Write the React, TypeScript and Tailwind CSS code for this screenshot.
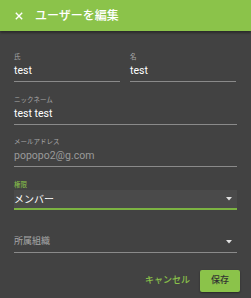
import { ReactNode } from "react";

const font = { fontFamily: 'Roboto, "Noto Sans CJK JP", sans-serif' };

function Caret() {
  return (
    <svg width="6" height="4" viewBox="0 0 6 4" className="shrink-0">
      <path d="M0 0 L6 0 L3 3.5 Z" fill="#e0e0e0" />
    </svg>
  );
}

function Field({
  label,
  children,
  className = "",
}: {
  label?: string;
  children: ReactNode;
  className?: string;
}) {
  return (
    <div className={className}>
      <div className="h-[8px] text-[6.5px] leading-[8px] text-[#a8a8a8]">{label}</div>
      <div className="flex h-[20px] items-center text-[10.5px] text-white">{children}</div>
      <div className="h-px bg-[#8a8a8a]" />
    </div>
  );
}

export default function App() {
  return (
    <div className="h-[298px] w-[251px] overflow-hidden bg-[#424242]" style={font}>
      {/* Header */}
      <div className="relative z-10 flex h-[31px] items-center gap-[12px] bg-[#8bc34a] pl-[15px] shadow-[0_2px_2px_rgba(0,0,0,0.35)]">
        <svg width="8" height="8" viewBox="0 0 8 8">
          <path d="M0.8 0.8 L7.2 7.2 M7.2 0.8 L0.8 7.2" stroke="#fff" strokeWidth="1.4" />
        </svg>
        <span className="text-[12px] font-medium text-white">ユーザーを編集</span>
      </div>

      <div className="px-[14px] pt-[22px]">
        <div className="grid grid-cols-2 gap-[10px] pr-px">
          <Field label="氏">test</Field>
          <Field label="名">test</Field>
        </div>

        <Field label="ニックネーム" className="mt-[14px]">
          test test
        </Field>

        <Field label="メールアドレス" className="mt-[13px]">
          <span className="text-[#9a9a9a]">popopo2@g.com</span>
        </Field>

        {/* Select, focused */}
        <div className="mt-[14px]">
          <div className="h-[9px] text-[6.5px] leading-[8px] text-[#8bc34a]">権限</div>
          <div className="flex h-[18px] items-center justify-between bg-[#4a4a4a] pr-[5px] text-[10px] text-white">
            <span>メンバー</span>
            <Caret />
          </div>
          <div className="h-[2px] bg-[#7cb342]" />
        </div>

        {/* Select, empty */}
        <div className="mt-[14px]">
          <div className="h-[8px]" />
          <div className="flex h-[20px] items-center justify-between pr-[5px] text-[9px] text-[#a8a8a8]">
            <span>所属組織</span>
            <Caret />
          </div>
          <div className="h-px bg-[#8a8a8a]" />
        </div>

        <div className="mt-[17px] flex items-center justify-end gap-[10px] pr-[-2px]">
          <button className="text-[9px] font-medium text-[#8bc34a]">キャンセル</button>
          <button className="mr-[-3px] h-[22px] w-[40px] rounded-[2px] bg-[#8bc34a] text-[9px] font-medium text-[#333] shadow-[0_1px_2px_rgba(0,0,0,0.4)]">
            保存
          </button>
        </div>
      </div>
    </div>
  );
}
